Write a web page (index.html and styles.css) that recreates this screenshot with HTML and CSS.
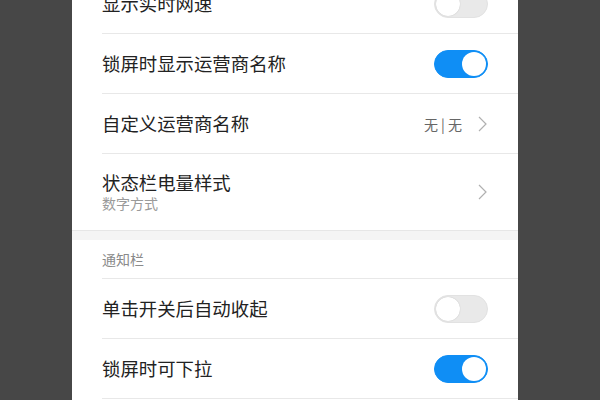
FILE: index.html
```html
<!DOCTYPE html>
<html lang="zh-CN">
<head>
<meta charset="utf-8">
<link rel="stylesheet" href="styles.css">
</head>
<body>
<div class="screen">
  <div class="group first">
    <div class="row">
      <div class="label"><div class="title">显示实时网速</div></div>
      <span class="switch"></span>
    </div>
    <div class="row">
      <div class="label"><div class="title">锁屏时显示运营商名称</div></div>
      <span class="switch on"></span>
    </div>
    <div class="row">
      <div class="label"><div class="title">自定义运营商名称</div></div>
      <span class="value">无 | 无</span>
      <svg class="chev" width="9" height="16" viewBox="0 0 9 16"><path d="M1 1 L8 8 L1 15" fill="none" stroke="#b0b0b0" stroke-width="1.2"/></svg>
    </div>
    <div class="row tall last">
      <div class="label"><div class="title">状态栏电量样式</div><div class="sub">数字方式</div></div>
      <svg class="chev" width="9" height="16" viewBox="0 0 9 16"><path d="M1 1 L8 8 L1 15" fill="none" stroke="#b0b0b0" stroke-width="1.2"/></svg>
    </div>
  </div>
  <div class="band"></div>
  <div class="group">
    <div class="header">通知栏</div>
    <div class="row">
      <div class="label"><div class="title">单击开关后自动收起</div></div>
      <span class="switch"></span>
    </div>
    <div class="row">
      <div class="label"><div class="title">锁屏时可下拉</div></div>
      <span class="switch on"></span>
    </div>
  </div>
</div>
</body>
</html>
```
FILE: styles.css
```css
html, body {
  margin: 0;
  padding: 0;
  background: #474747;
  height: 400px;
  overflow: hidden;
}
body {
  font-family: "Noto Sans CJK SC", "Noto Sans", sans-serif;
}
.screen {
  width: 446px;
  margin-left: 72px;
  height: 400px;
  background: #ffffff;
  overflow: hidden;
}
.group.first {
  margin-top: -26px;
}
.row {
  display: flex;
  align-items: center;
  height: 59px;
  margin-left: 30px;
  padding-right: 30px;
  border-bottom: 1px solid #e8e8e8;
}
.row.tall {
  height: 76px;
}
.row.last {
  border-bottom: none;
}
.label {
  flex: 1;
  display: flex;
  flex-direction: column;
}
.title {
  font-size: 18.4px;
  line-height: 23px;
  color: #222222;
}
.sub {
  font-size: 14px;
  line-height: 19px;
  color: #9a9a9a;
}
.value {
  font-size: 14px;
  color: #666666;
  margin-right: 16px;
}
.chev {
  display: block;
  margin-right: 1px;
}
.switch {
  position: relative;
  width: 54px;
  height: 28px;
  border-radius: 14px;
  background: #e9e9e9;
  box-sizing: border-box;
  border: 1px solid #e2e2e2;
}
.switch::after {
  content: "";
  position: absolute;
  top: 1px;
  left: 1px;
  width: 24px;
  height: 24px;
  border-radius: 50%;
  background: #ffffff;
  box-shadow: 0 0 1px rgba(0,0,0,0.25);
}
.switch.on {
  background: #0f8ef5;
  border-color: #0f8ef5;
}
.switch.on::after {
  left: auto;
  right: 1px;
  box-shadow: none;
}
.band {
  height: 9px;
  background: #f4f4f4;
  border-top: 1px solid #e6e6e6;
}
.header {
  height: 38px;
  margin-left: 30px;
  border-bottom: 1px solid #e8e8e8;
  display: flex;
  align-items: center;
  font-size: 14px;
  color: #8a8a8a;
}
```
